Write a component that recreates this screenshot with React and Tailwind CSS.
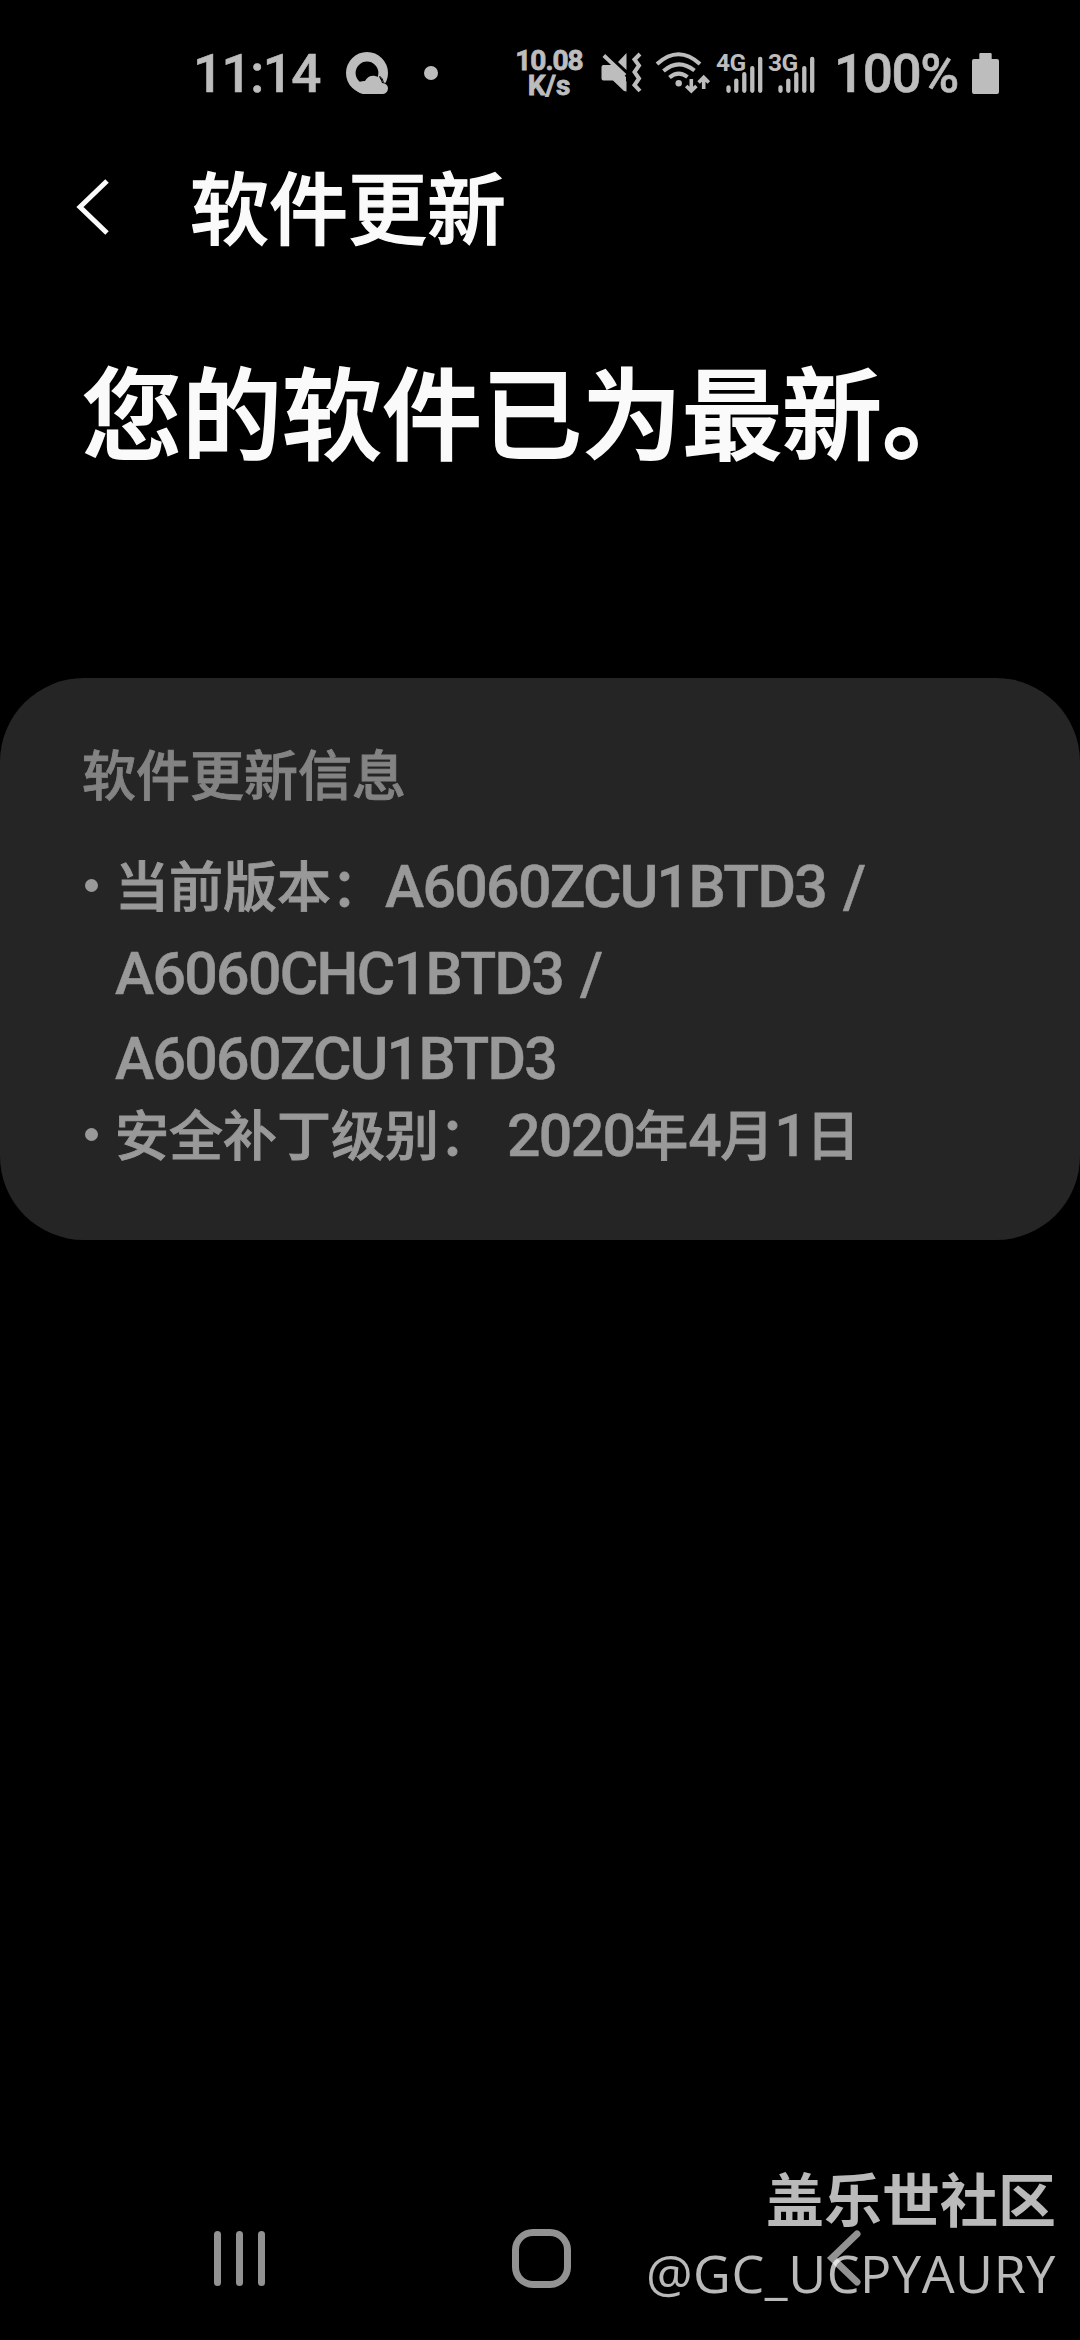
// src/App.jsx
import React from 'react';

const latin = 'font-[Roboto,sans-serif]';
const version =
  'text-[59px] tracking-[-1.7px] [word-spacing:4px] font-[Roboto,sans-serif] [-webkit-text-stroke:0.5px_#999999]';

const BrowserIcon = () => (
  <svg className="h-[42px] w-[42px] shrink-0" viewBox="0 0 42 42">
    <circle cx="21" cy="21" r="16.2" fill="none" stroke="#bdbdbd" strokeWidth="9.6" />
    <path d="M33 24 Q36 26 36.6 30 L42 32 V42 H37 V37 Z" fill="#000000" />
    <path d="M17 42 Q10 40 9 36 Q11 28.5 19 29 Q22 23.5 28 23.8 Q34.5 24.5 36 31 Q42 31.5 42 36.6 Q41.5 41.6 37 42 Z" fill="#bdbdbd" />
    <path d="M33.5 24 Q37 26.5 37.4 30.4" fill="none" stroke="#000000" strokeWidth="1" />
  </svg>
);

const MuteIcon = () => (
  <svg className="h-[42px] w-[44px] shrink-0" viewBox="600 53 44 42" fill="#bdbdbd">
    <path d="M603.5 66 H609 L626.5 82.5 V92.5 L624 92 L613 81.5 H603.5 Q601.5 81.5 601.5 79.5 V68 Q601.5 66 603.5 66 Z" />
    <path d="M626.5 54 V71 L618 63 Z" />
    <path d="M603 66 H613 L626 78 V92 L613 81 H603 Z" />
    <path d="M603.8 56.5 L625 76.5" fill="none" stroke="#bdbdbd" strokeWidth="3.8" />
    <path d="M640 55 L634.5 60.5 L639 66.5 L634.5 73 L639 79.5 L634.5 86 L640 92" fill="none" stroke="#bdbdbd" strokeWidth="4" />
  </svg>
);

const WifiIcon = () => (
  <svg className="h-[42px] w-[56px] shrink-0" viewBox="655 51 56 42" fill="none" stroke="#bdbdbd">
    <path d="M657 63 Q678.5 43.5 700 63" strokeWidth="4" />
    <path d="M663.5 70 Q678.5 57 694.5 69.5" strokeWidth="4" />
    <path d="M669.5 76.5 Q678.5 69 687.5 76" strokeWidth="4" />
    <circle cx="678.7" cy="82.3" r="3.2" fill="#bdbdbd" stroke="none" />
    <path d="M691.3 78 V90 M686.2 85 L691.3 90 L696.4 85" strokeWidth="3.6" />
    <path d="M703.7 88 V76 M698.6 81.5 L703.7 76.4 L708.8 81.5" strokeWidth="3.6" />
  </svg>
);

const SignalIcon = ({ label }) => (
  <svg className="h-[42px] w-[52px] shrink-0 overflow-visible" viewBox="0 0 52 42">
    <text x="0" y="19.2" fontSize="24.5" fontWeight="700" letterSpacing="-0.6" fill="#bdbdbd" className={latin}>
      {label}
    </text>
    <g stroke="#bdbdbd" strokeWidth="4.3" strokeLinecap="round">
      <path d="M12.5 35.5 V38.8 M20.3 28.6 V38.8 M28.3 22.2 V38.8 M36.3 16.1 V38.8 M44.2 6.8 V38.8" />
    </g>
  </svg>
);

const BatteryIcon = () => (
  <svg className="h-[41px] w-[27px] shrink-0" viewBox="0 0 27 41" fill="#bdbdbd">
    <path d="M8.5 0 H18.5 Q19.7 0 19.7 1.2 V6 H25 Q27 6 27 8 V39 Q27 41 25 41 H2 Q0 41 0 39 V8 Q0 6 2 6 H7.3 V1.2 Q7.3 0 8.5 0 Z" />
  </svg>
);

const StatusBar = () => (
  <div className={`flex h-[146px] items-center pl-[193px] text-[#bdbdbd] ${latin}`}>
    <span className="w-[153px] shrink-0 pt-[3px] text-[53px] leading-none font-medium tracking-[-1.5px] [-webkit-text-stroke:0.6px_#bdbdbd]">
      11:14
    </span>
    <BrowserIcon />
    <span className="ml-9 size-[14px] shrink-0 rounded-full bg-[#bdbdbd]" />
    <div className="ml-[71px] w-20 shrink-0 pt-px text-center text-[28px] font-bold [-webkit-text-stroke:0.8px_#bdbdbd]">
      <p className="leading-[24px] tracking-[-1px]">10.08</p>
      <p className="leading-[25px]">K/s</p>
    </div>
    <div className="ml-[11px] flex shrink-0">
      <MuteIcon />
    </div>
    <div className="ml-[11px] flex shrink-0">
      <WifiIcon />
    </div>
    <div className="ml-[5px] flex shrink-0">
      <SignalIcon label="4G" />
      <SignalIcon label="3G" />
    </div>
    <span className="ml-[14px] w-[138px] shrink-0 pt-[3px] text-[53px] leading-none font-medium tracking-[-1.4px] [-webkit-text-stroke:0.6px_#bdbdbd]">
      100%
    </span>
    <BatteryIcon />
  </div>
);

const InfoItem = ({ children }) => (
  <li className="flex">
    <span className="mt-[31px] mr-[17px] ml-[3px] size-[13px] shrink-0 rounded-full bg-[#999999]" />
    <div>{children}</div>
  </li>
);

const NavBar = () => (
  <div className="flex h-[86px] items-center pl-[214px]">
    <div className="flex w-[298px] gap-[15px]">
      <span className="h-[55px] w-[7px] rounded-full bg-[#929292]" />
      <span className="h-[55px] w-[7px] rounded-full bg-[#929292]" />
      <span className="h-[55px] w-[7px] rounded-full bg-[#929292]" />
    </div>
    <span className="size-[59px] rounded-[21px] border-[7px] border-[#929292]" />
    <svg className="ml-[255px] h-[56px] w-[36px]" viewBox="0 0 36 56" fill="none">
      <path d="M31 4 L6 28 L31 52" stroke="#929292" strokeWidth="7" strokeLinecap="round" />
    </svg>
  </div>
);

const App = () => {
  return (
    <div
      lang="zh-CN"
      className="relative flex h-[2340px] w-[1080px] flex-col overflow-hidden bg-black font-['Noto_Sans_CJK_SC',sans-serif]"
    >
      <StatusBar />

      <header className="flex h-[122px] items-center pl-[76px] text-[#fafafa]">
        <svg className="h-[56px] w-[34px]" viewBox="0 0 34 56" fill="none">
          <path d="M31 2 L4 28 L31 54" stroke="#fafafa" strokeWidth="5" />
        </svg>
        <h1 className="ml-20 pb-[6px] text-[79px] leading-none font-medium [-webkit-text-stroke:1.3px_#fafafa]">软件更新</h1>
      </header>

      <h2 className="mt-[91px] pl-[82px] text-[100px] leading-[100px] font-medium whitespace-nowrap text-[#fafafa] [-webkit-text-stroke:1.8px_#fafafa]">
        您的软件已为最新。
      </h2>

      <section className="mt-[219px] h-[562px] rounded-[84px] bg-[#252525] pl-[82px]">
        <h3 className="pt-[68px] text-[54px] leading-[54px] font-medium text-[#838383] [-webkit-text-stroke:0.9px_#838383]">
          软件更新信息
        </h3>
        <ul className="mt-[48px] text-[54px] font-medium text-[#999999]">
          <InfoItem>
            <p className="h-[90px] leading-[72px] whitespace-nowrap">
              <span className="[-webkit-text-stroke:0.9px_#999999]">当前版本：</span>
              <span className={version}>A6060ZCU1BTD3 /</span>
            </p>
            <p className={`h-[85px] leading-[72px] ${version}`}>A6060CHC1BTD3 /</p>
            <p className={`h-[74px] leading-[72px] ${version}`}>A6060ZCU1BTD3</p>
          </InfoItem>
          <InfoItem>
            <p className="leading-[72px] whitespace-nowrap [-webkit-text-stroke:0.9px_#999999]">
              安全补丁级别：
              <span className={`${version} -ml-[3px]`}> 2020</span>年
              <span className={version}>4</span>月
              <span className={version}>1</span>日
            </p>
          </InfoItem>
        </ul>
      </section>

      <div className="mt-auto mb-[39px]">
        <NavBar />
      </div>

      {/* Community signature over the navigation bar */}
      <div className="absolute right-[24px] bottom-[31px] text-right text-white/73">
        <p className="text-[58px] leading-[80px] font-bold">盖乐世社区</p>
        <p className="font-['Open_Sans',sans-serif] text-[52px] leading-[72px] tracking-[0.6px]">@GC_UCPYAURY</p>
      </div>
    </div>
  );
};

export default App;
